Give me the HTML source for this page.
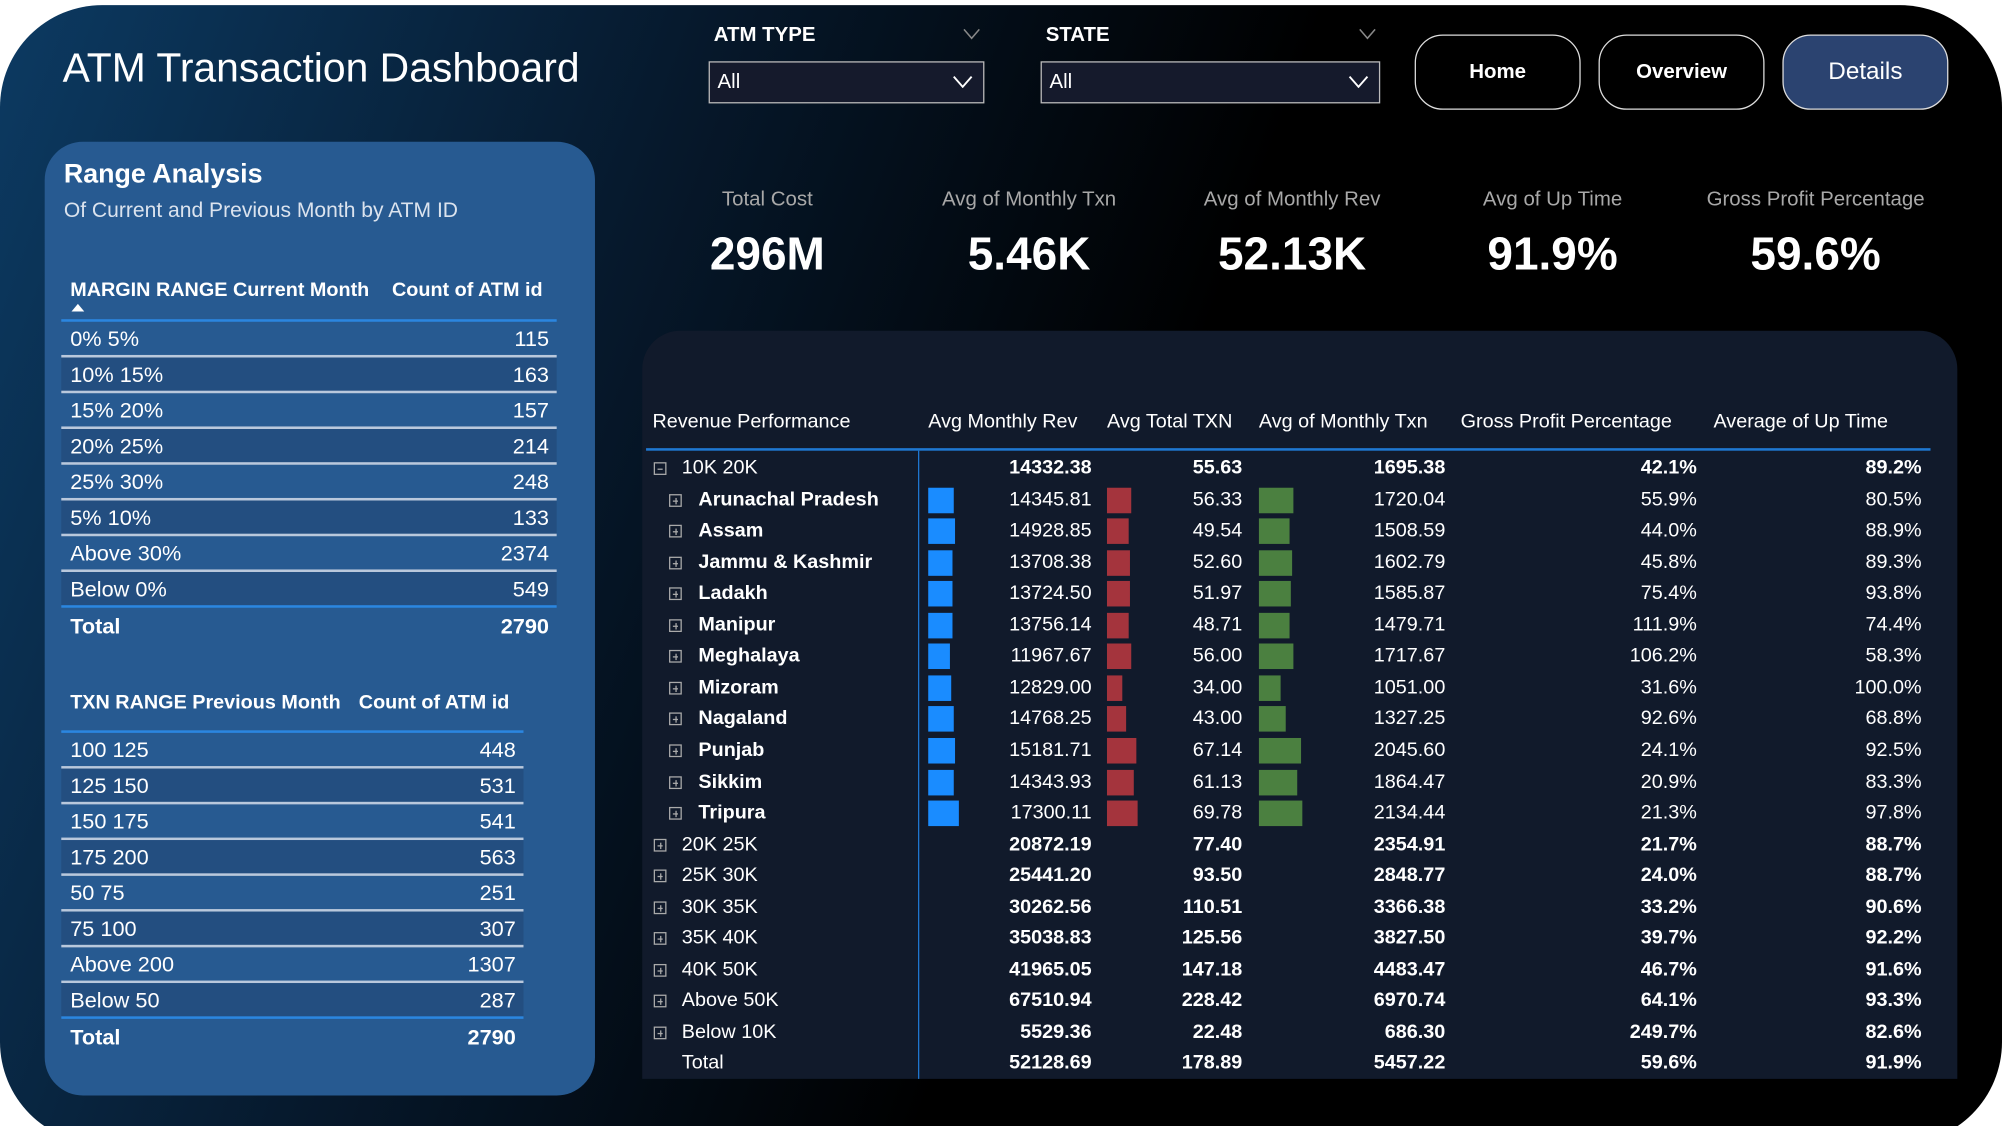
<!DOCTYPE html>
<html><head><meta charset="utf-8"><style>
*{margin:0;padding:0;box-sizing:border-box}
html,body{width:2002px;height:1126px;overflow:hidden;background:#fff}
#s{position:absolute;left:0;top:0;width:1568px;height:882px;transform:scale(1.27679);transform-origin:0 0;font-family:"Liberation Sans",sans-serif;color:#fff;overflow:hidden}
.bg{position:absolute;left:0;top:4px;width:1568px;height:892px;border-radius:80px;background:linear-gradient(110deg,#0c3a62 0%,#06182b 30%,#000 55%,#000 100%)}
.a{position:absolute;white-space:nowrap}
.panel{position:absolute;left:35px;top:111px;width:431px;height:747px;background:#275a91;border-radius:30px}
.lr{position:absolute;height:28px;font-size:17px;line-height:27px;border-bottom:2px solid #b9c8dc}
.lr span{position:absolute}
.tbl{position:absolute;left:503px;top:259px;width:1030px;height:586px;background:#111a2b;border-radius:30px 30px 0 0}
.r{position:absolute;left:0;width:1568px;height:24px;font-size:15.5px;line-height:24px}
.r span{position:absolute;text-align:right}
.bar{position:absolute;height:20px;top:2px}
.ex{position:absolute;width:10px;height:10px;border:1px solid #aaa;top:7px}
.ex:before{content:"";position:absolute;left:2px;top:4px;width:4px;height:1px;background:#aaa}
.ex.p:after{content:"";position:absolute;left:4px;top:2px;width:1px;height:5px;background:#aaa}
.btn{position:absolute;top:27px;width:130px;height:59px;border:1.5px solid #ddd;border-radius:22px;font-size:16px;font-weight:bold;text-align:center;line-height:57px}
.dd{position:absolute;top:48px;height:33px;border:1.5px solid #bbb;background:#151a2c;font-size:16px;line-height:31px;padding-left:6px}
.dd svg{position:absolute;right:8px;top:10px}
.kl{position:absolute;top:148px;font-size:16px;color:#a8a8a8;text-align:center;width:200px}
.kv{position:absolute;top:178px;font-size:36px;font-weight:bold;text-align:center;width:200px}
</style></head><body><div id="s">
<div class="bg"></div>
<div class="a" style="left:49px;top:35px;font-size:32px">ATM Transaction Dashboard</div>

<div class="a" style="left:559px;top:19px;font-size:16px;font-weight:bold">ATM TYPE</div>
<svg class="a" style="left:754px;top:22px" width="14" height="9"><path d="M1 1L7 8L13 1" stroke="#888" fill="none" stroke-width="1.2"/></svg>
<div class="dd" style="left:555px;width:216px">All<svg width="16" height="10"><path d="M1 1L8 9L15 1" stroke="#fff" fill="none" stroke-width="1.5"/></svg></div>
<div class="a" style="left:819px;top:19px;font-size:16px;font-weight:bold">STATE</div>
<svg class="a" style="left:1064px;top:22px" width="14" height="9"><path d="M1 1L7 8L13 1" stroke="#888" fill="none" stroke-width="1.2"/></svg>
<div class="dd" style="left:815px;width:266px">All<svg width="16" height="10"><path d="M1 1L8 9L15 1" stroke="#fff" fill="none" stroke-width="1.5"/></svg></div>
<div class="btn" style="left:1108px;background:#000">Home</div>
<div class="btn" style="left:1252px;background:#000">Overview</div>
<div class="btn" style="left:1396px;background:#2b4370;font-weight:normal;font-size:19px">Details</div>

<div class="kl" style="left:501px">Total Cost</div><div class="kv" style="left:501px">296M</div>
<div class="kl" style="left:706px">Avg of Monthly Txn</div><div class="kv" style="left:706px">5.46K</div>
<div class="kl" style="left:912px">Avg of Monthly Rev</div><div class="kv" style="left:912px">52.13K</div>
<div class="kl" style="left:1116px">Avg of Up Time</div><div class="kv" style="left:1116px">91.9%</div>
<div class="kl" style="left:1322px">Gross Profit Percentage</div><div class="kv" style="left:1322px">59.6%</div>

<div class="panel"></div>
<div class="a" style="left:50px;top:125px;font-size:21px;font-weight:bold">Range Analysis</div>
<div class="a" style="left:50px;top:156px;font-size:16.5px;color:#dbe3ee">Of Current and Previous Month by ATM ID</div>

<div class="a" style="left:55px;top:219px;font-size:15.5px;font-weight:bold">MARGIN RANGE Current Month</div>
<div class="a" style="left:307px;top:219px;font-size:15.5px;font-weight:bold">Count of ATM id</div>
<div class="a" style="left:56px;top:238px;width:0;height:0;border-left:5px solid transparent;border-right:5px solid transparent;border-bottom:6px solid #fff"></div>
<div class="a" style="left:48px;top:250px;width:388px;height:2px;background:#2b86e0"></div>
<div class="a" style="left:55px;top:542px;font-size:15.5px;font-weight:bold">TXN RANGE Previous Month</div>
<div class="a" style="left:281px;top:542px;font-size:15.5px;font-weight:bold">Count of ATM id</div>
<div class="a" style="left:48px;top:572px;width:362px;height:2px;background:#2b86e0"></div>

<div style="position:absolute;left:48px;top:252px">
<div class="lr" style="top:0;width:388px"><span style="left:7px">0% 5%</span><span style="right:6px">115</span></div>
<div class="lr" style="top:28px;width:388px;background:#234e80"><span style="left:7px">10% 15%</span><span style="right:6px">163</span></div>
<div class="lr" style="top:56px;width:388px"><span style="left:7px">15% 20%</span><span style="right:6px">157</span></div>
<div class="lr" style="top:84px;width:388px;background:#234e80"><span style="left:7px">20% 25%</span><span style="right:6px">214</span></div>
<div class="lr" style="top:112px;width:388px"><span style="left:7px">25% 30%</span><span style="right:6px">248</span></div>
<div class="lr" style="top:140px;width:388px;background:#234e80"><span style="left:7px">5% 10%</span><span style="right:6px">133</span></div>
<div class="lr" style="top:168px;width:388px"><span style="left:7px">Above 30%</span><span style="right:6px">2374</span></div>
<div class="lr" style="top:196px;width:388px;background:#234e80;border-bottom-color:#2b86e0"><span style="left:7px">Below 0%</span><span style="right:6px">549</span></div>
<div class="lr" style="top:225px;width:388px;border:0;font-weight:bold"><span style="left:7px">Total</span><span style="right:6px">2790</span></div>
</div>
<div style="position:absolute;left:48px;top:574px">
<div class="lr" style="top:0;width:362px"><span style="left:7px">100 125</span><span style="right:6px">448</span></div>
<div class="lr" style="top:28px;width:362px;background:#234e80"><span style="left:7px">125 150</span><span style="right:6px">531</span></div>
<div class="lr" style="top:56px;width:362px"><span style="left:7px">150 175</span><span style="right:6px">541</span></div>
<div class="lr" style="top:84px;width:362px;background:#234e80"><span style="left:7px">175 200</span><span style="right:6px">563</span></div>
<div class="lr" style="top:112px;width:362px"><span style="left:7px">50 75</span><span style="right:6px">251</span></div>
<div class="lr" style="top:140px;width:362px;background:#234e80"><span style="left:7px">75 100</span><span style="right:6px">307</span></div>
<div class="lr" style="top:168px;width:362px"><span style="left:7px">Above 200</span><span style="right:6px">1307</span></div>
<div class="lr" style="top:196px;width:362px;background:#234e80;border-bottom-color:#2b86e0"><span style="left:7px">Below 50</span><span style="right:6px">287</span></div>
<div class="lr" style="top:225px;width:362px;border:0;font-weight:bold"><span style="left:7px">Total</span><span style="right:6px">2790</span></div>
</div>

<div class="tbl"></div>
<div class="a" style="left:511px;top:322px;font-size:15.5px">Revenue Performance</div>
<div class="a" style="left:727px;top:322px;font-size:15.5px">Avg Monthly Rev</div>
<div class="a" style="left:867px;top:322px;font-size:15.5px">Avg Total TXN</div>
<div class="a" style="left:986px;top:322px;font-size:15.5px">Avg of Monthly Txn</div>
<div class="a" style="left:1144px;top:322px;font-size:15.5px">Gross Profit Percentage</div>
<div class="a" style="left:1342px;top:322px;font-size:15.5px">Average of Up Time</div>
<div class="a" style="left:506px;top:351px;width:1006px;height:2px;background:#1f78d1"></div>
<div class="a" style="left:719px;top:353px;width:1px;height:492px;background:#1f78d1"></div>
<div id="rows"></div>
<script>
var R=[
["10K 20K",0,"14332.38","55.63","1695.38","42.1%","89.2%"],
["Arunachal Pradesh",1,"14345.81","56.33","1720.04","55.9%","80.5%"],
["Assam",1,"14928.85","49.54","1508.59","44.0%","88.9%"],
["Jammu & Kashmir",1,"13708.38","52.60","1602.79","45.8%","89.3%"],
["Ladakh",1,"13724.50","51.97","1585.87","75.4%","93.8%"],
["Manipur",1,"13756.14","48.71","1479.71","111.9%","74.4%"],
["Meghalaya",1,"11967.67","56.00","1717.67","106.2%","58.3%"],
["Mizoram",1,"12829.00","34.00","1051.00","31.6%","100.0%"],
["Nagaland",1,"14768.25","43.00","1327.25","92.6%","68.8%"],
["Punjab",1,"15181.71","67.14","2045.60","24.1%","92.5%"],
["Sikkim",1,"14343.93","61.13","1864.47","20.9%","83.3%"],
["Tripura",1,"17300.11","69.78","2134.44","21.3%","97.8%"],
["20K 25K",2,"20872.19","77.40","2354.91","21.7%","88.7%"],
["25K 30K",2,"25441.20","93.50","2848.77","24.0%","88.7%"],
["30K 35K",2,"30262.56","110.51","3366.38","33.2%","90.6%"],
["35K 40K",2,"35038.83","125.56","3827.50","39.7%","92.2%"],
["40K 50K",2,"41965.05","147.18","4483.47","46.7%","91.6%"],
["Above 50K",2,"67510.94","228.42","6970.74","64.1%","93.3%"],
["Below 10K",2,"5529.36","22.48","686.30","249.7%","82.6%"],
["Total",3,"52128.69","178.89","5457.22","59.6%","91.9%"]];
var h="",E=[855,973,1132,1329,1505];
R.forEach(function(r,i){
var y=355+i*24.55,t=r[1],b=(t!=1);
h+='<div class="r" style="top:'+y+'px;font-weight:'+(b?'bold':'normal')+'">';
if(t==0)h+='<i class="ex" style="left:512px"></i>';
if(t==1)h+='<i class="ex p" style="left:524px"></i>';
if(t==2)h+='<i class="ex p" style="left:512px"></i>';
h+='<span style="left:'+(t==1?547:534)+'px;text-align:left;font-weight:'+(t==1?'bold':'normal')+'">'+r[0]+'</span>';
if(t==1){
h+='<i class="bar" style="left:727px;width:'+(parseFloat(r[2])/17300*24)+'px;background:#1a8cff"></i>';
h+='<i class="bar" style="left:867px;width:'+(parseFloat(r[3])/69.78*24)+'px;background:#a4343d"></i>';
h+='<i class="bar" style="left:986px;width:'+(parseFloat(r[4])/2134*34)+'px;background:#4b8040"></i>';}
for(var k=0;k<5;k++)h+='<span style="left:'+(E[k]-120)+'px;width:120px">'+r[k+2]+'</span>';
h+='</div>';});
document.getElementById('rows').innerHTML=h;
</script>
</div></body></html>
